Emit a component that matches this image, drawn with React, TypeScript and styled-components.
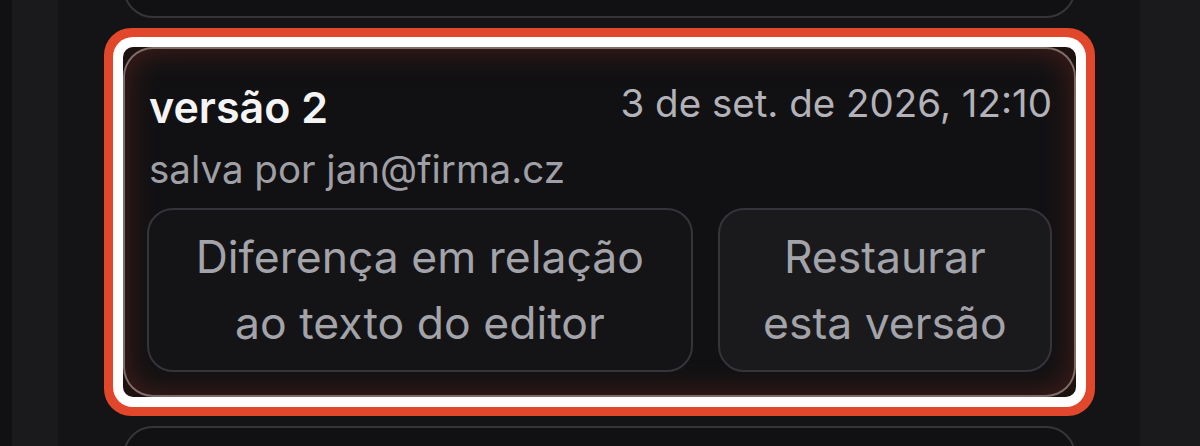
import styled, { createGlobalStyle } from 'styled-components';

const GlobalStyle = createGlobalStyle`
  html, body {
    margin: 0;
    padding: 0;
    background: #121214;
    font-family: Inter, "Noto Sans", "Liberation Sans", sans-serif;
    overflow: hidden;
  }
`;

const Shell = styled.div`
  display: flex;
  height: 446px;
  background: #121214;
`;

const Edge = styled.div<{ $w: number; $bg: string }>`
  flex: 0 0 ${(p) => p.$w}px;
  background: ${(p) => p.$bg};
`;

const Panel = styled.main`
  flex: 1;
  background: #141417;
  padding: 0 64px 0 65px;
  overflow: hidden;
`;

const List = styled.ul`
  list-style: none;
  margin: -332px 0 0;
  padding: 0;
  display: flex;
  flex-direction: column;
  gap: 29px;
`;

const Item = styled.li<{ $active?: boolean }>`
  border-radius: 10px;
  background: ${(p) => (p.$active ? '#1e1210' : 'transparent')};
  box-shadow: ${(p) =>
    p.$active ? '0 0 0 10px #ffffff, 0 0 0 19px #e1472b' : 'none'};
`;

const Card = styled.article<{ $active?: boolean }>`
  border-radius: 30px;
  border: 2px solid ${(p) => (p.$active ? 'rgba(235, 200, 190, 0.5)' : '#35353a')};
  background: #111113;
  box-shadow: ${(p) =>
    p.$active ? 'inset 0 0 28px 4px rgba(115, 42, 32, 0.45)' : 'none'};
  padding: 36px 22px 23px 22px;
  height: 350px;
  box-sizing: border-box;
  display: flex;
  flex-direction: column;
`;

const Head = styled.div`
  display: flex;
  justify-content: space-between;
  align-items: flex-start;
  padding: 0 0 0 2px;
`;

const Title = styled.h3`
  margin: 0;
  font-size: 43px;
  line-height: 44px;
  font-weight: 600;
  color: #f4f4f5;
`;

const Stamp = styled.time`
  font-size: 38.5px;
  line-height: 44px;
  color: #b2b2b8;
  margin-top: -4px;
`;

const Author = styled.p`
  margin: 18px 0 0 2px;
  font-size: 38.5px;
  line-height: 44px;
  color: #9f9fa6;
`;

const Actions = styled.div`
  display: grid;
  grid-template-columns: 547fr 335fr;
  gap: 25px;
  margin-top: auto;
`;

const ActionButton = styled.button<{ $raised?: boolean }>`
  font: inherit;
  font-size: 44.5px;
  line-height: 66px;
  color: #a3a3aa;
  background: ${(p) => (p.$raised ? '#1a1a1d' : '#141416')};
  border: 2px solid #34343a;
  border-radius: 26px;
  padding: 14px 10px;
  text-align: center;
  cursor: pointer;
`;

const Line = styled.span`
  display: block;
  white-space: nowrap;
`;

type Version = { n: number; when: string; by: string; active?: boolean };

const versions: Version[] = [
  { n: 3, when: '3 de set. de 2026, 12:42', by: 'jan@firma.cz' },
  { n: 2, when: '3 de set. de 2026, 12:10', by: 'jan@firma.cz', active: true },
  { n: 1, when: '2 de set. de 2026, 17:05', by: 'jan@firma.cz' },
];

export default function App() {
  return (
    <>
      <GlobalStyle />
      <Shell>
        <Edge $w={12} $bg="#111113" />
        <Edge $w={46} $bg="#1a1a1d" />
        <Panel>
          <List>
            {versions.map((v) => (
              <Item key={v.n} $active={v.active}>
                <Card $active={v.active}>
                  <Head>
                    <Title>versão {v.n}</Title>
                    <Stamp>{v.when}</Stamp>
                  </Head>
                  <Author>salva por {v.by}</Author>
                  <Actions>
                    <ActionButton>
                      <Line>Diferença em relação</Line>
                      <Line>ao texto do editor</Line>
                    </ActionButton>
                    <ActionButton $raised>
                      <Line>Restaurar</Line>
                      <Line>esta versão</Line>
                    </ActionButton>
                  </Actions>
                </Card>
              </Item>
            ))}
          </List>
        </Panel>
        <Edge $w={60} $bg="#1a1a1d" />
      </Shell>
    </>
  );
}
